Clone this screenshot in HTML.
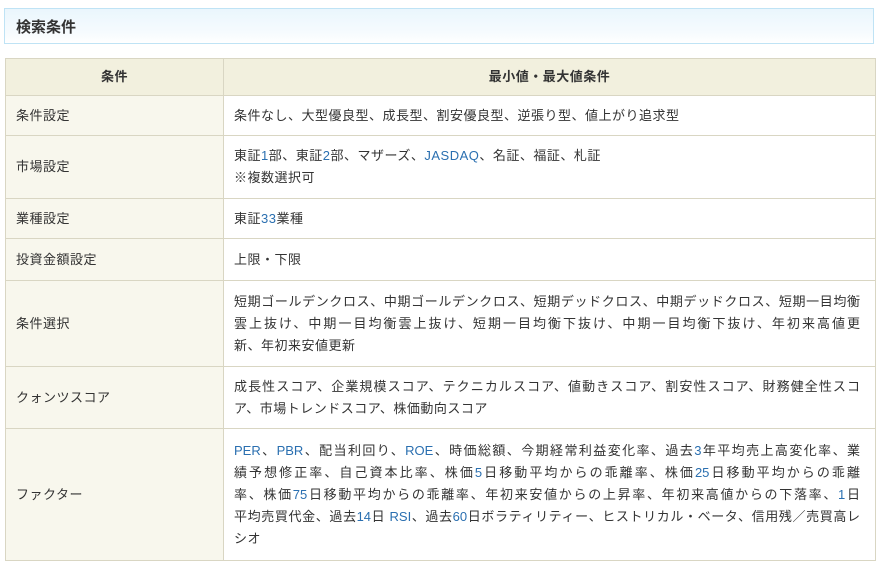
<!DOCTYPE html>
<html><head><meta charset="utf-8"><style>
body{margin:0;background:#fff;font-family:"Liberation Sans","Noto Sans CJK JP",sans-serif;color:#333;font-size:13px;}
.h{position:absolute;left:4px;top:8px;width:868px;height:34px;border:1px solid #bfe3f5;background:linear-gradient(#eaf6fd,#f6fbfe 70%,#fff);}
.h span{position:absolute;left:11px;top:7px;font-size:15px;font-weight:bold;color:#333;}
table{position:absolute;left:5px;top:58px;width:871px;border-collapse:collapse;table-layout:fixed;}
td,th{border:1px solid #d9d6c3;padding:0 0 0 10px;line-height:22px;vertical-align:middle;text-align:left;letter-spacing:0.5px;white-space:nowrap;overflow:hidden;}
th{background:#f2f0de;height:36px;text-align:center;padding:0;font-weight:bold;}
td.a{background:#f8f7ed;}
td.b{background:#fff;padding:0 0 0 10px;}
.n{color:#2a6fb0}
.j{display:block;width:626px;white-space:normal;text-align:justify;text-align-last:justify;letter-spacing:0;}
</style></head><body>
<div class="h"><span>検索条件</span></div>
<table>
<colgroup><col style="width:218px"><col></colgroup>
<tr><th>条件</th><th>最小値・最大値条件</th></tr>
<tr style="height:40px"><td class="a">条件設定</td><td class="b">条件なし、大型優良型、成長型、割安優良型、逆張り型、値上がり追求型</td></tr>
<tr style="height:63px"><td class="a">市場設定</td><td class="b">東証<span class="n">1</span>部、東証<span class="n">2</span>部、マザーズ、<span class="n">JASDAQ</span>、名証、福証、札証<br>※複数選択可</td></tr>
<tr style="height:40px"><td class="a">業種設定</td><td class="b">東証<span class="n">33</span>業種</td></tr>
<tr style="height:42px"><td class="a">投資金額設定</td><td class="b">上限・下限</td></tr>
<tr style="height:86px"><td class="a">条件選択</td><td class="b"><span class="j">短期ゴールデンクロス、中期ゴールデンクロス、短期デッドクロス、中期デッドクロス、短期一目均衡</span><span class="j">雲上抜け、中期一目均衡雲上抜け、短期一目均衡下抜け、中期一目均衡下抜け、年初来高値更</span>新、年初来安値更新</td></tr>
<tr style="height:62px"><td class="a">クォンツスコア</td><td class="b"><span class="j">成長性スコア、企業規模スコア、テクニカルスコア、値動きスコア、割安性スコア、財務健全性スコ</span>ア、市場トレンドスコア、株価動向スコア</td></tr>
<tr style="height:132px"><td class="a">ファクター</td><td class="b"><span class="j"><span class="n">PER</span>、<span class="n">PBR</span>、配当利回り、<span class="n">ROE</span>、時価総額、今期経常利益変化率、過去<span class="n">3</span>年平均売上高変化率、業</span><span class="j">績予想修正率、自己資本比率、株価<span class="n">5</span>日移動平均からの乖離率、株価<span class="n">25</span>日移動平均からの乖離</span><span class="j">率、株価<span class="n">75</span>日移動平均からの乖離率、年初来安値からの上昇率、年初来高値からの下落率、<span class="n">1</span>日</span><span class="j">平均売買代金、過去<span class="n">14</span>日 <span class="n">RSI</span>、過去<span class="n">60</span>日ボラティリティー、ヒストリカル・ベータ、信用残／売買高レ</span>シオ</td></tr>
</table>
</body></html>
